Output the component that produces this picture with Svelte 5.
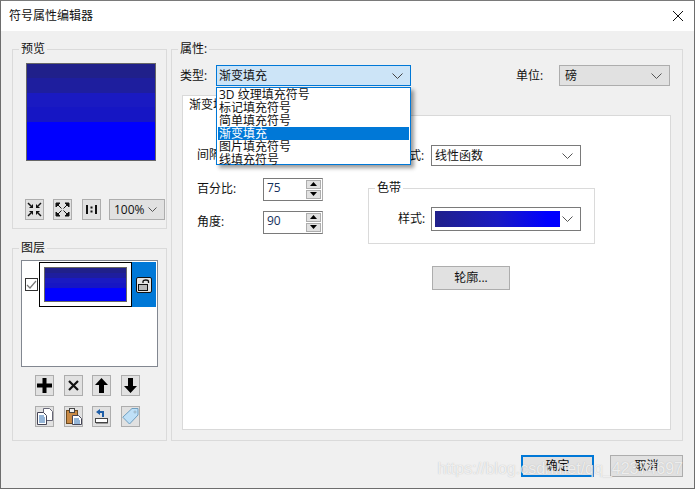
<script>
  // Entries of the open fill type dropdown.
  const fillTypes = ['3D 纹理填充符号', '标记填充符号', '简单填充符号', '渐变填充', '图片填充符号', '线填充符号'];
  const selectedType = '渐变填充';
</script>

<div class="window">
  <header class="titlebar">
    <span>符号属性编辑器</span>
    <svg class="close" width="12" height="12" viewBox="0 0 12 12"><path d="M1 1l10 10M11 1L1 11" stroke="#111" fill="none" /></svg>
  </header>

  <div class="content">
    <div class="left">
      <fieldset class="preview">
        <legend>预览</legend>
        <div class="symbol big"></div>
        <div class="zoombar">
          <button class="icon" aria-label="缩小">
            <svg width="15" height="15" viewBox="0 0 15 15" fill="#111">
              <path d="M6 2v4H2z" /><path d="M1 1l3 3" stroke="#111" stroke-width="1.500" />
              <path d="M9 2v4h4z" /><path d="M14 1l-3 3" stroke="#111" stroke-width="1.500" />
              <path d="M6 13V9H2z" /><path d="M1 14l3-3" stroke="#111" stroke-width="1.500" />
              <path d="M9 13V9h4z" /><path d="M14 14l-3-3" stroke="#111" stroke-width="1.500" />
            </svg>
          </button>
          <button class="icon second" aria-label="放大">
            <svg width="15" height="15" viewBox="0 0 15 15" fill="#111" stroke="#111">
              <path d="M1 1h4L1 5zM3 3l3.500 3.500" />
              <path d="M14 1h-4l4 4zM12 3L8.500 6.500" />
              <path d="M1 14h4l-4-4zM3 12l3.500-3.500" />
              <path d="M14 14h-4l4-4zM12 12L8.500 8.500" />
            </svg>
          </button>
          <button class="icon one" aria-label="1:1">
            <svg width="11" height="9" viewBox="0 0 11 9"><path d="M0 0h2v9H0zM9 0h2v9H9zM4.500 1.500h2v2h-2zM4.500 5.500h2v2h-2z" fill="#111" /></svg>
          </button>
          <div class="combo gray zoomlevel">
            <span>100%</span>
            <svg class="chev" width="9" height="5" viewBox="0 0 9 5"><path d="M.5.500l4 4 4-4" fill="none" stroke="#555" /></svg>
          </div>
        </div>
      </fieldset>

      <fieldset class="layers">
        <legend>图层</legend>
        <div class="layerlist">
          <div class="layer">
            <span class="check">
              <svg width="11" height="9" viewBox="0 0 11 9"><path d="M1 5l3 3 6-7" fill="none" stroke="#777" stroke-width="1.200" /></svg>
            </span>
            <div class="thumb"><div class="symbol"></div></div>
            <div class="lockcell">
              <svg width="16" height="16" viewBox="0 0 16 16">
                <rect x=".5" y=".5" width="15" height="15" rx="1.500" fill="#e4e4e4" stroke="#111" />
                <rect x="2.500" y="7.500" width="9" height="6" fill="#bbb" stroke="#111" />
                <path d="M7 6V4.500C7 2.500 12.500 2.500 12.500 4.500V6" fill="none" stroke="#111" stroke-width="1.300" />
              </svg>
            </div>
          </div>
        </div>
        <div class="toolgrid">
          <button class="icon" aria-label="添加">
            <svg width="15" height="15" viewBox="0 0 15 15"><path d="M5.500 0h4v5.500H15v4H9.500V15h-4V9.500H0v-4h5.500z" fill="#000" /></svg>
          </button>
          <button class="icon" aria-label="删除">
            <svg width="11" height="11" viewBox="0 0 11 11"><path d="M1 1l9 9M10 1l-9 9" stroke="#111" stroke-width="2.200" fill="none" /></svg>
          </button>
          <button class="icon" aria-label="上移">
            <svg width="13" height="15" viewBox="0 0 13 15"><path d="M6.500 0L13 7H9v8H4V7H0z" fill="#000" /></svg>
          </button>
          <button class="icon" aria-label="下移">
            <svg width="13" height="15" viewBox="0 0 13 15"><path d="M4 0h5v8h4l-6.500 7L0 8h4z" fill="#000" /></svg>
          </button>
          <button class="icon" aria-label="复制">
            <svg width="16" height="17" viewBox="0 0 16 17">
              <path d="M6.500.5h6l3 3v9h-9z" fill="#fff" stroke="#667" />
              <path d="M.5 4.500h6l3 3v9h-9z" fill="#fff" stroke="#445" />
              <path d="M2 8h5M2 10h6M2 12h6M2 14h6" stroke="#2a6cb0" />
            </svg>
          </button>
          <button class="icon" aria-label="粘贴">
            <svg width="16" height="17" viewBox="0 0 16 17">
              <rect x=".5" y="2.500" width="11" height="13" fill="#c98a45" stroke="#6b4a20" />
              <rect x="3.500" y=".5" width="5" height="4" fill="#eee" stroke="#444" />
              <path d="M6.500 7.500h6l3 3v6h-9z" fill="#fff" stroke="#445" />
              <path d="M8 11h5M8 13h6M8 15h6" stroke="#2a6cb0" />
            </svg>
          </button>
          <button class="icon" aria-label="撤销">
            <svg width="13" height="15" viewBox="0 0 13 15">
              <path d="M5 0L1 3l4 3V4h2v4h2V2H5z" fill="#1f5fa8" />
              <rect x=".5" y="9.500" width="12" height="4" fill="#fff" stroke="#444" />
              <path d="M1 14.500h12" stroke="#999" />
            </svg>
          </button>
          <button class="icon" aria-label="标签">
            <svg width="17" height="17" viewBox="0 0 17 17">
              <path d="M10 .5h6v6.500L7.500 16 .8 9.200z" fill="#bfe0f7" stroke="#6f9fc0" />
              <circle cx="13" cy="4" r="1" fill="#fff" stroke="#5f88a3" stroke-width=".6" />
            </svg>
          </button>
        </div>
      </fieldset>
    </div>

    <fieldset class="props">
      <legend>属性:</legend>
      <div class="toprow">
        <span class="typelabel">类型:</span>
        <div class="typewrap">
          <div class="combo active">
            <span>{selectedType}</span>
            <svg class="chev" width="11" height="6" viewBox="0 0 11 6"><path d="M.5.500l5 5 5-5" fill="none" stroke="#444" /></svg>
          </div>
          <ul class="typelist">
            {#each fillTypes as t}
              <li class:sel={t === selectedType}>{t}</li>
            {/each}
          </ul>
        </div>
        <span class="unitlabel">单位:</span>
        <div class="combo gray unit">
          <span>磅</span>
          <svg class="chev" width="11" height="6" viewBox="0 0 11 6"><path d="M.5.500l5 5 5-5" fill="none" stroke="#555" /></svg>
        </div>
      </div>

      <div class="tabstrip"><span class="tab">渐变填充</span></div>
      <div class="panel">
        <div class="col-a">
          <div class="field gap"><span>间隔:</span></div>
          <div class="field">
            <span>百分比:</span>
            <div class="spin">
              <span class="val">75</span>
              <div class="arrows">
                <i><svg width="7" height="4" viewBox="0 0 7 4"><path d="M3.500 0L7 4H0z" /></svg></i>
                <i><svg width="7" height="4" viewBox="0 0 7 4"><path d="M0 0h7L3.500 4z" /></svg></i>
              </div>
            </div>
          </div>
          <div class="field">
            <span>角度:</span>
            <div class="spin">
              <span class="val">90</span>
              <div class="arrows">
                <i><svg width="7" height="4" viewBox="0 0 7 4"><path d="M3.500 0L7 4H0z" /></svg></i>
                <i><svg width="7" height="4" viewBox="0 0 7 4"><path d="M0 0h7L3.500 4z" /></svg></i>
              </div>
            </div>
          </div>
        </div>

        <div class="col-b">
          <div class="stylerow">
            <span>样式:</span>
            <div class="combo white func">
              <span>线性函数</span>
              <svg class="chev" width="11" height="6" viewBox="0 0 11 6"><path d="M.5.500l5 5 5-5" fill="none" stroke="#555" /></svg>
            </div>
          </div>
          <fieldset class="ramp">
            <legend>色带</legend>
            <div class="stylerow">
              <span>样式:</span>
              <div class="combo white func tall">
                <div class="rampbar"></div>
                <svg class="chev" width="11" height="6" viewBox="0 0 11 6"><path d="M.5.500l5 5 5-5" fill="none" stroke="#555" /></svg>
              </div>
            </div>
          </fieldset>
          <button class="outline">轮廓...</button>
        </div>
      </div>
    </fieldset>
  </div>

  <footer class="actions">
    <button class="primary">确定</button>
    <button>取消</button>
  </footer>

  <div class="watermark">https://blog.csdn.net/qq_42374697</div>
</div>

<style>
  :global(body) {
    background: #f0f0f0;
  }

  .window {
    position: relative;
    box-sizing: border-box;
    width: 695px;
    height: 489px;
    border: 1px solid #6d6d6d;
    border-top-color: #7a7a7a;
    background: #f0f0f0;
    font: 12px/16px "Open Sans", "Noto Sans CJK SC", sans-serif;
    color: #111;
    overflow: hidden;
  }

  .titlebar {
    display: flex;
    justify-content: space-between;
    align-items: center;
    height: 30px;
    padding: 0 9px 0 8px;
    background: #fff;
  }

  .close {
    margin-right: 1px;
  }

  .content {
    display: flex;
    gap: 4px;
    padding: 10px 11px 0 11px;
  }

  fieldset {
    margin: 0;
    padding: 0;
    min-width: 0;
    box-sizing: border-box;
    border: 1px solid #dadada;
  }

  legend {
    padding: 0 2px;
  }

  .left {
    display: flex;
    flex-direction: column;
    gap: 11px;
    width: 155px;
  }

  .preview {
    height: 188px;
    padding: 6px 0 0 13px;
  }

  .preview legend {
    margin-left: -7px;
  }

  .symbol {
    box-sizing: border-box;
    border: 1px solid #666;
    background: linear-gradient(#20208a 0 15%, #1e1e9e 15% 30%, #1a1ac2 30% 45%, #1616c4 45% 60%, #0000ff 60%);
  }

  .symbol.big {
    width: 130px;
    height: 98px;
  }

  .zoombar {
    display: flex;
    align-items: center;
    margin: 38px 0 0 -1px;
  }

  button {
    box-sizing: border-box;
    margin: 0;
    padding: 0;
    font: inherit;
    color: inherit;
    border: 1px solid #adadad;
    background: #e1e1e1;
  }

  .icon {
    display: flex;
    justify-content: center;
    align-items: center;
    width: 19px;
    height: 21px;
  }

  .zoombar .icon {
    margin-right: 9px;
  }

  .zoombar .icon.second {
    margin-right: 10px;
  }

  .zoombar .icon.one {
    margin-right: 8px;
  }

  .combo {
    box-sizing: border-box;
    display: flex;
    justify-content: space-between;
    align-items: center;
    height: 21px;
    padding: 0 7px 0 2px;
    border: 1px solid #adadad;
  }

  .combo.gray {
    background: #e1e1e1;
  }

  .combo.white {
    background: #fff;
    border-color: #7a7a7a;
  }

  .combo.active {
    width: 195px;
    background: #cce4f7;
    border-color: #0078d7;
  }

  .zoomlevel {
    width: 56px;
    padding-left: 4px;
  }

  .layers {
    height: 201px;
    padding: 4px 0 0 8px;
  }

  .layers legend {
    margin-left: -2px;
  }

  .layerlist {
    box-sizing: border-box;
    width: 137px;
    height: 107px;
    padding: 1px;
    border: 1px solid #828790;
    background: #fff;
  }

  .layer {
    display: flex;
    align-items: center;
    height: 45px;
  }

  .check {
    display: flex;
    justify-content: center;
    align-items: center;
    box-sizing: border-box;
    width: 13px;
    height: 13px;
    margin: 0 1px 0 2px;
    border: 1px solid #333;
  }

  .thumb {
    box-sizing: border-box;
    width: 93px;
    height: 45px;
    padding: 4px;
    border: 1px solid #000;
  }

  .thumb .symbol {
    height: 35px;
  }

  .lockcell {
    display: flex;
    justify-content: center;
    align-items: center;
    width: 24px;
    height: 45px;
    background: #0078d7;
  }

  .toolgrid {
    display: grid;
    grid-template-columns: 29px 28px 29px 19px;
    row-gap: 10px;
    margin: 8px 0 0 14px;
  }

  .props {
    position: relative;
    width: 512px;
    height: 400px;
    padding: 8px 0 0 8px;
  }

  .props > legend {
    margin-left: -2px;
  }

  .toprow {
    display: flex;
    align-items: center;
    height: 21px;
  }

  .typelabel {
    width: 36px;
  }

  .typewrap {
    position: relative;
    width: 195px;
  }

  .typelist {
    position: absolute;
    z-index: 2;
    top: 22px;
    left: 0;
    box-sizing: border-box;
    width: 195px;
    height: 78px;
    margin: 0;
    padding: 0 1px;
    list-style: none;
    border: 1px solid #0078d7;
    background: #fff;
    box-shadow: 3px 3px 4px rgba(0, 0, 0, 0.4);
  }

  .typelist li {
    height: 13px;
    line-height: 13px;
    padding-left: 1px;
  }

  .typelist li.sel {
    background: #0078d7;
    color: #fff;
  }

  .unitlabel {
    width: 43px;
    margin-left: 105px;
  }

  .unit {
    width: 111px;
    padding-left: 5px;
  }

  .tabstrip {
    display: flex;
    height: 20px;
    margin: 9px 0 0 2px;
  }

  .tab {
    box-sizing: border-box;
    width: 60px;
    height: 21px;
    padding: 1px 0 0 6px;
    border: 1px solid #d9d9d9;
    border-bottom: 0;
    background: #fff;
    position: relative;
    z-index: 1;
  }

  .panel {
    box-sizing: border-box;
    display: flex;
    width: 489px;
    height: 315px;
    margin-left: 2px;
    border: 1px solid #d9d9d9;
    background: #fff;
  }

  .col-a {
    width: 214px;
    padding: 30px 0 0 14px;
    box-sizing: border-box;
  }

  .field {
    display: flex;
    align-items: center;
    height: 22px;
    margin-bottom: 11px;
  }

  .field.gap {
    margin-bottom: 14px;
    height: 18px;
  }

  .field > span {
    width: 66px;
  }

  .spin {
    display: flex;
    box-sizing: border-box;
    width: 60px;
    height: 23px;
    border: 1px solid #7a7a7a;
    border-right-color: #adadad;
  }

  .val {
    flex: 1;
    padding: 1px 0 0 3px;
    color: #15305c;
  }

  .arrows {
    display: flex;
    flex-direction: column;
    gap: 1px;
    padding: 1px;
    background: #fff;
  }

  .arrows i {
    display: flex;
    justify-content: center;
    align-items: center;
    box-sizing: border-box;
    width: 15px;
    height: 9px;
    border: 1px solid #adadad;
    background: #e1e1e1;
  }

  .col-b {
    position: relative;
    padding: 29px 0 0 0;
    margin-left: -30px;
  }

  .stylerow {
    display: flex;
    align-items: center;
  }

  .col-b > .stylerow {
    padding-left: 30px;
  }

  .stylerow > span {
    width: 34px;
  }

  .ramp .stylerow > span {
    width: 33px;
  }

  .func {
    width: 150px;
    padding-left: 3px;
  }

  .tall {
    height: 24px;
  }

  .ramp {
    width: 227px;
    height: 64px;
    margin: 14px 0 0 1px;
    padding: 11px 0 0 29px;
  }

  .ramp legend {
    margin-left: -23px;
  }

  .rampbar {
    width: 125px;
    height: 16px;
    background: linear-gradient(90deg, #20208a, #1a1ac2 50%, #0000ff 90%);
  }

  .outline {
    display: block;
    width: 78px;
    height: 24px;
    margin: 22px 0 0 65px;
  }

  .actions {
    display: flex;
    justify-content: flex-end;
    gap: 16px;
    padding: 14px 11px 0 0;
  }

  .actions button {
    width: 73px;
    height: 22px;
  }

  .actions .primary {
    border: 2px solid #0078d7;
  }

  .watermark {
    position: absolute;
    right: 11px;
    bottom: 7px;
    font: 16px/24px "Liberation Sans", sans-serif;
    color: rgba(255, 255, 255, 0.75);
    text-shadow: 0 0 1px rgba(130, 130, 130, 0.5);
    white-space: nowrap;
    pointer-events: none;
  }
</style>
